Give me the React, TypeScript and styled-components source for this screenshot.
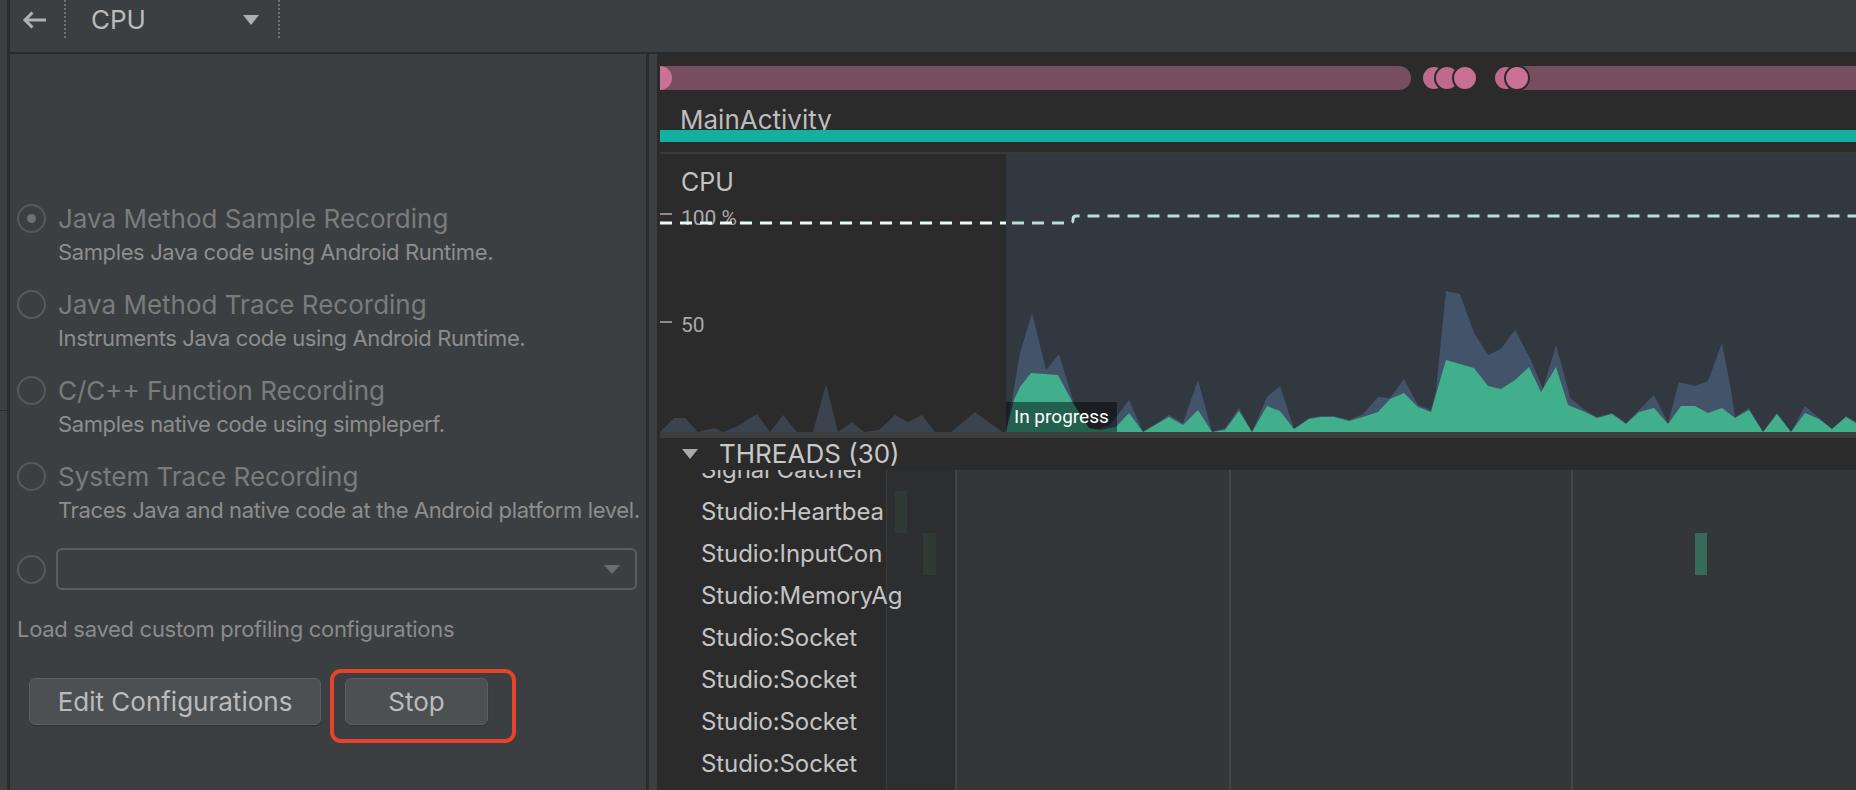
import React from "react";
import styled, { createGlobalStyle } from "styled-components";

const GlobalStyle = createGlobalStyle`
  html, body { margin: 0; padding: 0; background: #3c3f41; }
  body { width: 1856px; height: 790px; overflow: hidden; }
  #root { width: 1856px; height: 790px; }
  * { box-sizing: border-box; }
`;

const Root = styled.div`
  display: flex;
  width: 1856px;
  height: 790px;
  background: #3c3f41;
  overflow: hidden;
`;

const SideStrip = styled.div`
  width: 7px;
  flex: none;
  display: flex;
  flex-direction: column;
`;

const SideTop = styled.div`
  height: 411px;
  border-bottom: 1px solid #2b2b2b;
`;

const SideDivider = styled.div`
  width: 3px;
  flex: none;
  background: #2b2b2b;
`;

const Main = styled.div`
  flex: 1;
  min-width: 0;
  display: flex;
  flex-direction: column;
`;

const Toolbar = styled.div`
  height: 54px;
  flex: none;
  border-bottom: 2px solid #2b2b2b;
  display: flex;
  align-items: flex-start;
`;

const ToolbarRow = styled.div`
  height: 40px;
  display: flex;
  align-items: center;
`;

const BackButton = styled.div`
  margin-left: 11px;
  width: 26px;
  height: 20px;
  display: flex;
`;

const DottedSep = styled.div<{ $ml?: number }>`
  width: 2px;
  height: 40px;
  margin-left: ${(p) => p.$ml ?? 0}px;
  background-image: linear-gradient(#707274 50%, transparent 50%);
  background-size: 2px 4px;
`;

const ProfilerSelect = styled.div`
  width: 212px;
  height: 40px;
  display: flex;
  align-items: center;
  justify-content: space-between;
  padding: 0 19px 0 25px;
`;

const SelectText = styled.span`
  font-family: Inter, "Noto Sans", sans-serif;
  font-size: 26px;
  color: #bbbbbb;
  line-height: 30px;
`;

const Body = styled.div`
  flex: 1;
  display: flex;
  min-height: 0;
`;

const LeftPanel = styled.div`
  width: 636px;
  flex: none;
  background: #3c3f41;
  padding: 150px 0 0 7px;
  display: flex;
  flex-direction: column;
  font-family: Inter, "Noto Sans", sans-serif;
`;

const OptionRow = styled.div`
  display: flex;
  align-items: flex-start;
  gap: 12px;
  margin-bottom: 25px;
`;

const Radio = styled.div<{ $checked?: boolean }>`
  width: 29px;
  height: 29px;
  flex: none;
  border-radius: 50%;
  border: 2px solid #56595b;
  display: flex;
  align-items: center;
  justify-content: center;
  &::after {
    content: "";
    display: ${(p) => (p.$checked ? "block" : "none")};
    width: 9px;
    height: 9px;
    border-radius: 50%;
    background: #707070;
  }
`;

const OptionText = styled.div`
  display: flex;
  flex-direction: column;
  gap: 5px;
`;

const OptionTitle = styled.div`
  font-size: 26px;
  line-height: 30px;
  color: #7b7b7b;
  white-space: nowrap;
`;

const OptionDesc = styled.div`
  font-size: 22px;
  line-height: 26px;
  letter-spacing: -0.38px;
  color: #8d8d8d;
  white-space: nowrap;
`;

const ComboRow = styled.div`
  display: flex;
  align-items: center;
  gap: 10px;
`;

const Combo = styled.div`
  width: 581px;
  height: 42px;
  border: 2px solid #5b5e60;
  border-radius: 6px;
  display: flex;
  align-items: center;
  justify-content: flex-end;
  padding-right: 15px;
`;

const HintText = styled.div`
  margin-top: 26px;
  font-size: 22px;
  line-height: 26px;
  letter-spacing: -0.3px;
  color: #8b8b8b;
  white-space: nowrap;
`;

const ButtonRow = styled.div`
  margin-top: 27px;
  margin-left: 12px;
  display: flex;
  align-items: flex-start;
`;

const Button = styled.div<{ $w: number }>`
  width: ${(p) => p.$w}px;
  height: 47px;
  background: #4c5052;
  border: 1px solid #5c6063;
  border-radius: 6px;
  box-shadow: 0 1px 1px rgba(0, 0, 0, 0.25);
  display: flex;
  align-items: center;
  justify-content: center;
  font-size: 26px;
  color: #bbbbbb;
  white-space: nowrap;
`;

const EditButton = styled(Button)`
  margin-top: 9px;
`;

const Highlight = styled.div`
  margin-left: 9px;
  border: 4px solid #e5432c;
  border-radius: 11px;
  padding: 5px 24px 14px 11px;
`;

const Splitter = styled.div`
  width: 3px;
  flex: none;
  background: #2b2b2b;
`;

const SplitStrip = styled.div`
  width: 8px;
  flex: none;
  background: #3c3f41;
`;

const Profiler = styled.div`
  flex: 1;
  min-width: 0;
  background: #2b2b2b;
  padding: 12px 0 0 3px;
  display: flex;
  flex-direction: column;
  font-family: Inter, "Noto Sans", sans-serif;
`;

const EventTrack = styled.svg`
  display: block;
  flex: none;
`;

const ActivityLabelRow = styled.div`
  height: 40px;
  flex: none;
  display: flex;
  align-items: flex-end;
  padding-left: 20px;
`;

const ActivityLabel = styled.span`
  font-size: 26px;
  line-height: 20px;
  color: #bdbdbd;
  white-space: nowrap;
`;

const ActivityBar = styled.div`
  height: 12px;
  flex: none;
  background: #13b0a1;
  margin-bottom: 10px;
`;

const ChartPanel = styled.div`
  position: relative;
  height: 280px;
  flex: none;
  border-top: 2px solid #3a3a3a;
  display: flex;
`;

const PreRecord = styled.div`
  width: 346px;
  flex: none;
  background: #2b2b2b;
`;

const Recording = styled.div`
  flex: 1;
  background: #313840;
`;

const ChartSvg = styled.svg`
  position: absolute;
  left: 0;
  top: 0;
  display: block;
`;

const ChartTitle = styled.span`
  position: absolute;
  left: 21px;
  top: 15px;
  font-size: 25px;
  line-height: 26px;
  color: #c2c2c2;
`;

const InProgress = styled.span`
  position: absolute;
  left: 346px;
  top: 248px;
  height: 30px;
  padding: 0 8px;
  background: rgba(0, 0, 0, 0.45);
  color: #ffffff;
  font-family: Roboto, "Noto Sans", sans-serif;
  font-size: 19px;
  line-height: 30px;
  white-space: nowrap;
`;

const ThreadsHeader = styled.div`
  height: 38px;
  flex: none;
  border-top: 6px solid #3c3e40;
  display: flex;
  align-items: center;
  gap: 21px;
  padding-left: 22px;
`;

const ThreadsTitle = styled.span`
  font-size: 26px;
  line-height: 32px;
  color: #c8c8c8;
  white-space: nowrap;
`;

const ThreadsArea = styled.div`
  flex: 1;
  overflow: hidden;
`;

const ThreadList = styled.div`
  margin-top: -21px;
  display: flex;
  flex-direction: column;
`;

const ThreadRow = styled.div`
  height: 42px;
  flex: none;
  display: grid;
  grid-template-columns: 227px 70px 1fr;
`;

const NameCell = styled.div`
  z-index: 1;
  background: #2b2b2b;
  border-right: 1px solid #393a3c;
  padding-left: 41px;
  font-size: 24px;
  line-height: 42px;
  letter-spacing: -0.1px;
  color: #c4c4c4;
  white-space: nowrap;
`;

const StripCell = styled.div`
  position: relative;
  background: #2d2e30;
  border-right: 2px solid #434446;
`;

const TimelineCell = styled.div`
  position: relative;
  background-color: #353638;
  background-image: linear-gradient(
    to right,
    transparent 272px,
    #45464a 272px,
    #45464a 274px,
    transparent 274px,
    transparent 614px,
    #45464a 614px,
    #45464a 616px,
    transparent 616px
  );
`;

const StateBar = styled.div<{ $color: string }>`
  position: absolute;
  top: 0;
  bottom: 0;
  background: ${(p) => p.$color};
`;

type Pt = [number, number];
const toLocal = (pts: Pt[]) =>
  pts.map(([x, y]) => `${x - 660},${y - 154}`).join(" ");

const leftArea: Pt[] = [
  [660, 432], [674, 418], [685, 418], [698, 432], [714, 428], [723, 432],
  [736, 427], [757, 414], [770, 432], [783, 415], [797, 432], [813, 432],
  [826, 384], [838, 432], [852, 422], [864, 432], [879, 430], [895, 415],
  [908, 422], [922, 415], [935, 432], [951, 432], [975, 412], [1002, 432],
];

const blueArea: Pt[] = [
  [1006, 432], [1012, 400], [1020, 353], [1032, 313], [1046, 370], [1059, 354],
  [1069, 387], [1080, 425], [1095, 430], [1110, 425], [1129, 400], [1143, 432],
  [1169, 415], [1183, 423], [1198, 380], [1212, 432], [1225, 428], [1239, 408],
  [1252, 432], [1267, 397], [1280, 386], [1294, 429], [1309, 418], [1321, 416],
  [1334, 416], [1349, 420], [1363, 414], [1378, 397], [1390, 398], [1404, 379],
  [1418, 405], [1431, 410], [1436, 390], [1446, 291], [1460, 294], [1474, 333],
  [1488, 355], [1501, 349], [1515, 330], [1531, 360], [1543, 389], [1556, 345],
  [1568, 389], [1570, 398], [1585, 410], [1597, 417], [1612, 413], [1626, 423],
  [1639, 410], [1654, 395], [1668, 423], [1679, 382], [1695, 386], [1708, 381],
  [1722, 343], [1731, 390], [1735, 417], [1749, 408], [1763, 432], [1777, 413],
  [1791, 432], [1805, 406], [1819, 418], [1832, 429], [1846, 416], [1856, 422],
  [1856, 432],
];

const greenArea: Pt[] = [
  [1006, 432], [1014, 400], [1020, 387], [1031, 373], [1058, 375], [1073, 403],
  [1089, 428], [1100, 430], [1116, 427], [1129, 413], [1143, 432], [1169, 417],
  [1183, 425], [1198, 410], [1212, 432], [1225, 430], [1239, 411], [1252, 432],
  [1267, 406], [1280, 411], [1294, 429], [1309, 419], [1321, 417], [1334, 417],
  [1349, 421], [1363, 417], [1378, 412], [1390, 399], [1404, 393], [1418, 407],
  [1431, 412], [1443, 370], [1446, 360], [1474, 368], [1488, 386], [1501, 389],
  [1515, 380], [1529, 367], [1541, 392], [1556, 367], [1568, 405], [1585, 412],
  [1597, 418], [1612, 414], [1626, 424], [1639, 412], [1654, 408], [1668, 424],
  [1681, 406], [1695, 406], [1708, 413], [1722, 408], [1735, 418], [1749, 410],
  [1763, 432], [1777, 414], [1791, 432], [1805, 413], [1819, 419], [1832, 429],
  [1846, 417], [1856, 423], [1856, 432],
];

type Thread = {
  name: string;
  strip?: { left: number; width: number }[];
  timeline?: { left: number; width: number }[];
};

const threads: Thread[] = [
  { name: "Signal Catcher" },
  { name: "Studio:Heartbea", strip: [{ left: 8, width: 12 }] },
  {
    name: "Studio:InputCon",
    strip: [{ left: 36, width: 13 }],
    timeline: [{ left: 738, width: 12 }],
  },
  { name: "Studio:MemoryAg" },
  { name: "Studio:Socket" },
  { name: "Studio:Socket" },
  { name: "Studio:Socket" },
  { name: "Studio:Socket" },
  { name: "" },
];

const options = [
  { title: "Java Method Sample Recording", desc: "Samples Java code using Android Runtime.", checked: true },
  { title: "Java Method Trace Recording", desc: "Instruments Java code using Android Runtime." },
  { title: "C/C++ Function Recording", desc: "Samples native code using simpleperf." },
  { title: "System Trace Recording", desc: "Traces Java and native code at the Android platform level." },
];

export default function App() {
  return (
    <>
      <GlobalStyle />
      <Root>
        <SideStrip>
          <SideTop />
        </SideStrip>
        <SideDivider />
        <Main>
          <Toolbar>
            <ToolbarRow>
              <BackButton>
                <svg width="26" height="20" viewBox="0 0 26 20">
                  <path d="M25 10H4" stroke="#afb1b3" strokeWidth="3" fill="none" />
                  <path d="M11.5 2.5L4 10l7.5 7.5" stroke="#afb1b3" strokeWidth="3" fill="none" />
                </svg>
              </BackButton>
              <DottedSep $ml={17} />
              <ProfilerSelect>
                <SelectText>CPU</SelectText>
                <svg width="16" height="10" viewBox="0 0 16 10">
                  <polygon points="0,0 16,0 8,10" fill="#afafaf" />
                </svg>
              </ProfilerSelect>
              <DottedSep />
            </ToolbarRow>
          </Toolbar>
          <Body>
            <LeftPanel>
              {options.map((o) => (
                <OptionRow key={o.title}>
                  <Radio $checked={o.checked} />
                  <OptionText>
                    <OptionTitle>{o.title}</OptionTitle>
                    <OptionDesc>{o.desc}</OptionDesc>
                  </OptionText>
                </OptionRow>
              ))}
              <ComboRow>
                <Radio />
                <Combo>
                  <svg width="16" height="9" viewBox="0 0 16 9">
                    <polygon points="0,0 16,0 8,9" fill="#6b6d6f" />
                  </svg>
                </Combo>
              </ComboRow>
              <HintText>Load saved custom profiling configurations</HintText>
              <ButtonRow>
                <EditButton $w={292}>Edit Configurations</EditButton>
                <Highlight>
                  <Button $w={143}>Stop</Button>
                </Highlight>
              </ButtonRow>
            </LeftPanel>
            <Splitter />
            <SplitStrip />
            <Profiler>
              <EventTrack width="1196" height="24" viewBox="0 0 1196 24">
                <path d="M0 0H739A12 12 0 0 1 739 24H0Z" fill="#774e5e" />
                <circle cx="0" cy="12" r="12" fill="#cc7196" />
                <circle cx="774" cy="12" r="12" fill="#bf6a8b" stroke="#2b2b2b" strokeWidth="2" />
                <circle cx="787" cy="12" r="12" fill="#bf6a8b" stroke="#2b2b2b" strokeWidth="2" />
                <circle cx="805" cy="12" r="12" fill="#c86f93" stroke="#2b2b2b" strokeWidth="2" />
                <rect x="857" y="0" width="339" height="24" fill="#774e5e" />
                <circle cx="846" cy="12" r="12" fill="#bf6a8b" stroke="#2b2b2b" strokeWidth="2" />
                <circle cx="857" cy="12" r="12" fill="#cb7195" stroke="#2b2b2b" strokeWidth="2" />
              </EventTrack>
              <ActivityLabelRow>
                <ActivityLabel>MainActivity</ActivityLabel>
              </ActivityLabelRow>
              <ActivityBar />
              <ChartPanel>
                <PreRecord />
                <Recording />
                <ChartSvg width="1196" height="278" viewBox="0 0 1196 278">
                  <polygon points={toLocal(leftArea)} fill="#3a434e" />
                  <polygon points={toLocal(blueArea)} fill="#43546a" />
                  <polygon points={toLocal(greenArea)} fill="#41af8c" />
                  <line x1="0" y1="60" x2="12" y2="60" stroke="#8a8a8a" strokeWidth="2" />
                  <line x1="0" y1="168" x2="12" y2="168" stroke="#8a8a8a" strokeWidth="2" />
                  <text x="21" y="71" fontFamily="Roboto, sans-serif" fontSize="21" fill="#a9a9a9">
                    100 %
                  </text>
                  <text x="21" y="178" fontFamily="Roboto, sans-serif" fontSize="21" fill="#a9a9a9">
                    50
                  </text>
                  <path d="M0 69H346" stroke="#e9fcf6" strokeWidth="3" strokeDasharray="12 8" fill="none" />
                  <path
                    d="M346 69H410Q413 69 413 66V65Q413 62 416 62H1196"
                    stroke="#bcdcd4"
                    strokeWidth="3"
                    strokeDasharray="12 8"
                    strokeDashoffset="-6"
                    fill="none"
                  />
                </ChartSvg>
                <ChartTitle>CPU</ChartTitle>
                <InProgress>In progress</InProgress>
              </ChartPanel>
              <ThreadsHeader>
                <svg width="16" height="10" viewBox="0 0 16 10">
                  <polygon points="0,0 16,0 8,10" fill="#a9a9a9" />
                </svg>
                <ThreadsTitle>THREADS (30)</ThreadsTitle>
              </ThreadsHeader>
              <ThreadsArea>
                <ThreadList>
                  {threads.map((t, i) => (
                    <ThreadRow key={i}>
                      <NameCell>{t.name}</NameCell>
                      <StripCell>
                        {t.strip?.map((b, j) => (
                          <StateBar key={j} $color="#2f3a35" style={{ left: b.left, width: b.width }} />
                        ))}
                      </StripCell>
                      <TimelineCell>
                        {t.timeline?.map((b, j) => (
                          <StateBar key={j} $color="#366b5a" style={{ left: b.left, width: b.width }} />
                        ))}
                      </TimelineCell>
                    </ThreadRow>
                  ))}
                </ThreadList>
              </ThreadsArea>
            </Profiler>
          </Body>
        </Main>
      </Root>
    </>
  );
}
